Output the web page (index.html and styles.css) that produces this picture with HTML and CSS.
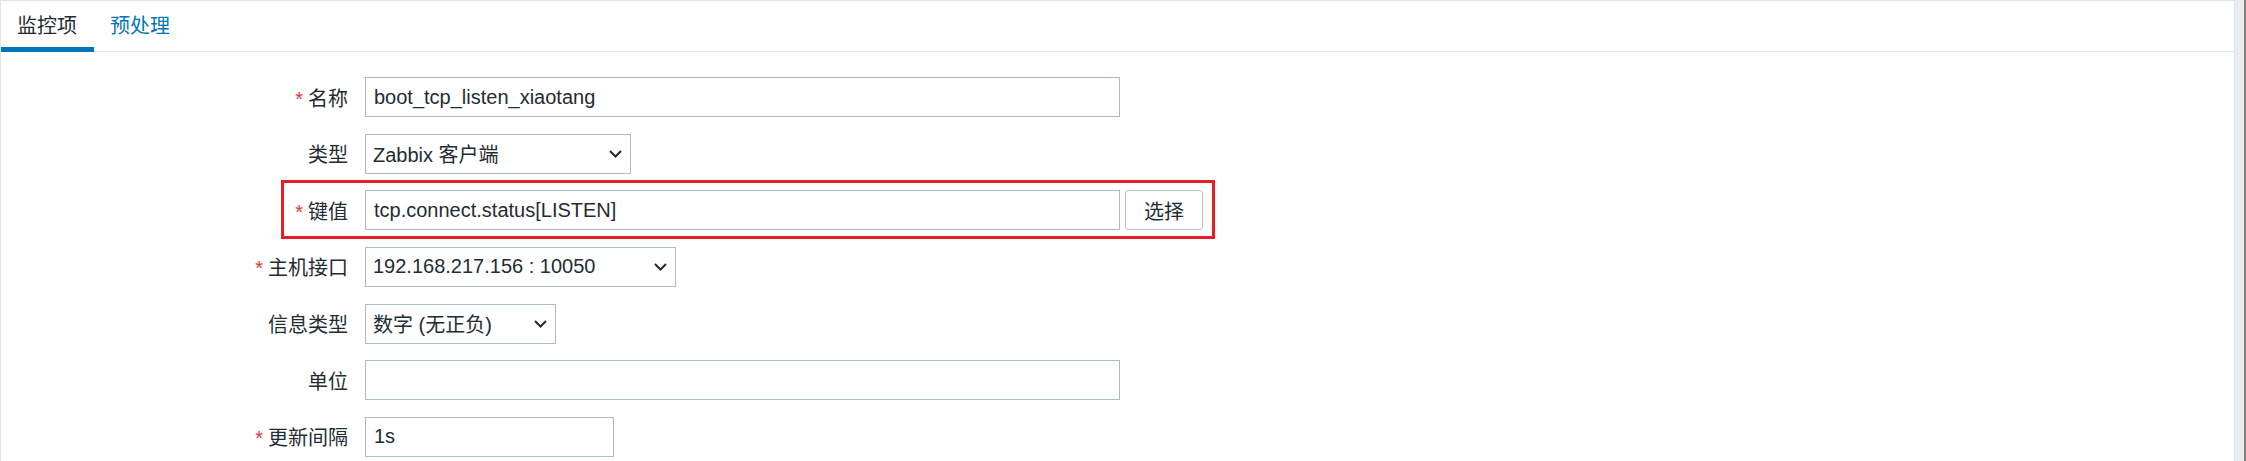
FILE: index.html
```html
<!DOCTYPE html>
<html lang="zh-CN">
<head>
    <meta charset="UTF-8">
    <meta name="viewport" content="width=device-width, initial-scale=1.0">
    <title>监控项</title>
    <link rel="stylesheet" href="styles.css">
</head>
<body>
    <div class="page">
        <ul class="tabs">
            <li class="tab active">监控项</li>
            <li class="tab">预处理</li>
        </ul>

        <div class="form">
            <div class="form-row">
                <label class="required">名称</label>
                <div class="field">
                    <input type="text" class="textbox wide" value="boot_tcp_listen_xiaotang">
                </div>
            </div>

            <div class="form-row">
                <label>类型</label>
                <div class="field">
                    <div class="select select-type">
                        <span>Zabbix 客户端</span>
                        <svg width="13" height="8" viewBox="0 0 13 8"><polyline points="1,1 6.5,6.5 12,1" /></svg>
                    </div>
                </div>
            </div>

            <!-- 키값 행: 빨간 테두리로 강조 -->
            <div class="form-row highlight">
                <label class="required">键值</label>
                <div class="field">
                    <input type="text" class="textbox wide" value="tcp.connect.status[LISTEN]">
                    <button class="button">选择</button>
                </div>
            </div>

            <div class="form-row">
                <label class="required">主机接口</label>
                <div class="field">
                    <div class="select select-interface">
                        <span>192.168.217.156 : 10050</span>
                        <svg width="13" height="8" viewBox="0 0 13 8"><polyline points="1,1 6.5,6.5 12,1" /></svg>
                    </div>
                </div>
            </div>

            <div class="form-row">
                <label>信息类型</label>
                <div class="field">
                    <div class="select select-info">
                        <span>数字 (无正负)</span>
                        <svg width="13" height="8" viewBox="0 0 13 8"><polyline points="1,1 6.5,6.5 12,1" /></svg>
                    </div>
                </div>
            </div>

            <div class="form-row">
                <label>单位</label>
                <div class="field">
                    <input type="text" class="textbox wide" value="">
                </div>
            </div>

            <div class="form-row">
                <label class="required">更新间隔</label>
                <div class="field">
                    <input type="text" class="textbox interval" value="1s">
                </div>
            </div>
        </div>
    </div>
</body>
</html>
```

FILE: styles.css
```css
html, body {
    height: 100%;
}
body {
    margin: 0;
    overflow: hidden;
    background-color: #ebeef0;
    border-right: 2px solid #808080;
    font-family: 'Liberation Sans', Arial, 'Noto Sans CJK SC', sans-serif;
    font-size: 20px;
    color: #1f2c33;
}
.page {
    width: 2235px;
    min-height: 480px;
    box-sizing: border-box;
    background-color: white;
    border: 1px solid #dfe4e7;
}

/* 탭 */
.tabs {
    display: flex;
    margin: 0;
    padding: 0;
    list-style: none;
    border-bottom: 1px solid #e3e7ea;
}
.tab {
    padding: 15px 17px 0 16px;
    height: 31px;
    line-height: 20px;
    color: #0275b8;
    border-bottom: 5px solid transparent;
    margin-bottom: -1px;
}
.tab.active {
    color: #1f2c33;
    border-bottom-color: #0275b8;
}

/* 폼 */
.form {
    display: flex;
    flex-direction: column;
    gap: 16.667px;
    padding-top: 25px;
}
.form-row {
    display: flex;
    align-items: center;
    height: 40px;
}
.form-row label {
    width: 364px;
    box-sizing: border-box;
    padding-right: 17px;
    text-align: right;
}
.form-row label.required::before {
    content: '*';
    color: #e33734;
    margin-right: 5px;
}
.field {
    display: flex;
    align-items: center;
    gap: 5px;
}
.textbox {
    height: 40px;
    box-sizing: border-box;
    border: 1px solid #acbbc2;
    padding: 0 8px;
    font-family: inherit;
    font-size: 20px;
    color: #1f2c33;
    background-color: white;
    outline: none;
}
.textbox.wide {
    width: 755px;
}
.textbox.interval {
    width: 249px;
}
.select {
    display: flex;
    align-items: center;
    justify-content: space-between;
    height: 40px;
    box-sizing: border-box;
    border: 1px solid #acbbc2;
    padding: 0 8px 0 7px;
}
.select svg {
    fill: none;
    stroke: #1f2c33;
    stroke-width: 2;
}
.select-type {
    width: 266px;
}
.select-interface {
    width: 311px;
}
.select-info {
    width: 191px;
}
.button {
    width: 78px;
    height: 40px;
    box-sizing: border-box;
    background-color: white;
    border: 1px solid #b8c3c9;
    border-radius: 3px;
    font-family: inherit;
    font-size: 20px;
    color: #1f2c33;
    padding: 0;
}

/* 강조 표시 (빨간 사각형) */
.highlight {
    position: relative;
}
.highlight::after {
    content: '';
    position: absolute;
    left: 280px;
    top: -10px;
    width: 934px;
    height: 59px;
    box-sizing: border-box;
    border: 3px solid #ea1c24;
}
```
